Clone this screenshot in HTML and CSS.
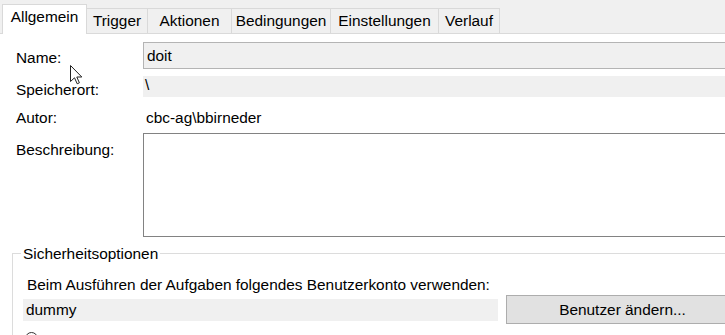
FILE: index.html
```html
<!DOCTYPE html>
<html lang="de">
<head>
<meta charset="utf-8">
<title>Aufgabe</title>
<link rel="stylesheet" href="styles.css">
</head>
<body>
<div class="window">
  <div class="tabs">
    <div class="tab active w-allgemein">Allgemein</div>
    <div class="tab w-trigger">Trigger</div>
    <div class="tab w-aktionen">Aktionen</div>
    <div class="tab w-bedingungen">Bedingungen</div>
    <div class="tab w-einstellungen">Einstellungen</div>
    <div class="tab w-verlauf">Verlauf</div>
  </div>
  <div class="page">
    <div class="row row-name">
      <div class="label label-name">Name:</div>
      <div class="field field-name">doit</div>
    </div>
    <div class="row row-ort">
      <div class="label label-ort">Speicherort:</div>
      <div class="field field-ort">\</div>
    </div>
    <div class="row row-autor">
      <div class="label">Autor:</div>
      <div class="value">cbc-ag\bbirneder</div>
    </div>
    <div class="row row-desc">
      <div class="label label-desc">Beschreibung:</div>
      <div class="textarea"></div>
    </div>
    <fieldset class="group">
      <legend class="legend">Sicherheitsoptionen</legend>
      <div class="account-label">Beim Ausführen der Aufgaben folgendes Benutzerkonto verwenden:</div>
      <div class="account-row">
        <div class="account">dummy</div>
        <div class="button">Benutzer ändern...</div>
      </div>
      <div class="radio-row"><span class="radio"></span></div>
    </fieldset>
  </div>
  <svg class="cursor" width="14" height="21" viewBox="0 0 14 21" aria-hidden="true">
    <path d="M0.5 0.5 L0.5 16.5 L4.5 12.8 L7.2 18.8 L9.4 17.8 L6.8 12 L11.8 12 Z" fill="#fff" stroke="#222" stroke-width="1" stroke-linejoin="miter"/>
  </svg>
</div>
</body>
</html>
```
FILE: styles.css
```css
html, body {
  margin: 0;
  padding: 0;
  background: #ffffff;
  overflow: hidden;
}

body {
  font-family: "Liberation Sans", Arial, sans-serif;
  font-size: 15.4px;
  color: #000;
}

.window {
  position: relative;
  width: 760px;
  height: 335px;
  overflow: hidden;
}

/* Tabs */
.tabs {
  display: flex;
  align-items: flex-end;
  height: 33px;
  padding-left: 2px;
  background: #f0f0f0;
  border-bottom: 1px solid #dadada;
}

.tab {
  box-sizing: border-box;
  height: 25px;
  padding-top: 1px;
  line-height: 21px;
  text-align: center;
  border-top: 1px solid #d9d9d9;
  border-right: 1px solid #d9d9d9;
  background: #f0f0f0;
  white-space: nowrap;
}

.tab.active {
  height: 30px;
  margin-bottom: -1px;
  background: #ffffff;
  border-left: 1px solid #d9d9d9;
  position: relative;
  z-index: 1;
}

.w-allgemein { width: 85px; }
.w-trigger { width: 61px; }
.w-aktionen { width: 84px; }
.w-bedingungen { width: 99px; }
.w-einstellungen { width: 108px; }
.w-verlauf { width: 61px; }

/* Form */
.page {
  padding-top: 8px;
}

.row {
  display: flex;
  align-items: flex-start;
  padding-left: 16px;
}

.label {
  width: 127px;
  flex: none;
  line-height: 21px;
  white-space: nowrap;
}

.row-name { height: 27px; }
.label-name { padding-top: 5px; }

.field {
  flex: 1;
  box-sizing: border-box;
  background: #f0f0f0;
  padding-left: 3px;
  white-space: nowrap;
}

.field-name {
  height: 27px;
  line-height: 25px;
  border: 1px solid #b4b4b4;
}

.row-ort {
  margin-top: 7px;
  height: 21px;
}
.label-ort { padding-top: 3px; }
.field-ort {
  height: 21px;
  line-height: 18px;
  padding-left: 2px;
}

.row-autor {
  margin-top: 10px;
  height: 21px;
}
.value {
  line-height: 21px;
  padding-left: 3px;
}

.row-desc {
  margin-top: 5px;
}
.label-desc { padding-top: 6px; }
.textarea {
  flex: 1;
  height: 104px;
  box-sizing: border-box;
  border: 1px solid #828282;
  background: #fff;
}

/* Group box */
.group {
  margin: 6px 0 0 12px;
  padding: 0 0 20px 8px;
  border: 1px solid #dcdcdc;
  min-width: 0;
}

.legend {
  padding: 0 2px;
  line-height: 21px;
}

.account-label {
  margin-top: 10px;
  padding-left: 6px;
  line-height: 21px;
  white-space: nowrap;
}

.account-row {
  display: flex;
  align-items: center;
  padding-left: 2px;
  height: 29px;
}

.account {
  width: 475px;
  height: 22px;
  line-height: 22px;
  padding-left: 3px;
  box-sizing: border-box;
  background: #f0f0f0;
}

.button {
  margin-left: 8px;
  width: 233px;
  height: 29px;
  box-sizing: border-box;
  border: 1px solid #adadad;
  background: #e1e1e1;
  text-align: center;
  line-height: 27px;
  white-space: nowrap;
}

.radio-row {
  margin-top: 8px;
  padding-left: 4px;
}

.radio {
  display: block;
  width: 13px;
  height: 13px;
  box-sizing: border-box;
  border: 1px solid #333;
  border-radius: 50%;
  background: #fff;
}

.cursor {
  position: absolute;
  left: 70px;
  top: 65px;
}
```
